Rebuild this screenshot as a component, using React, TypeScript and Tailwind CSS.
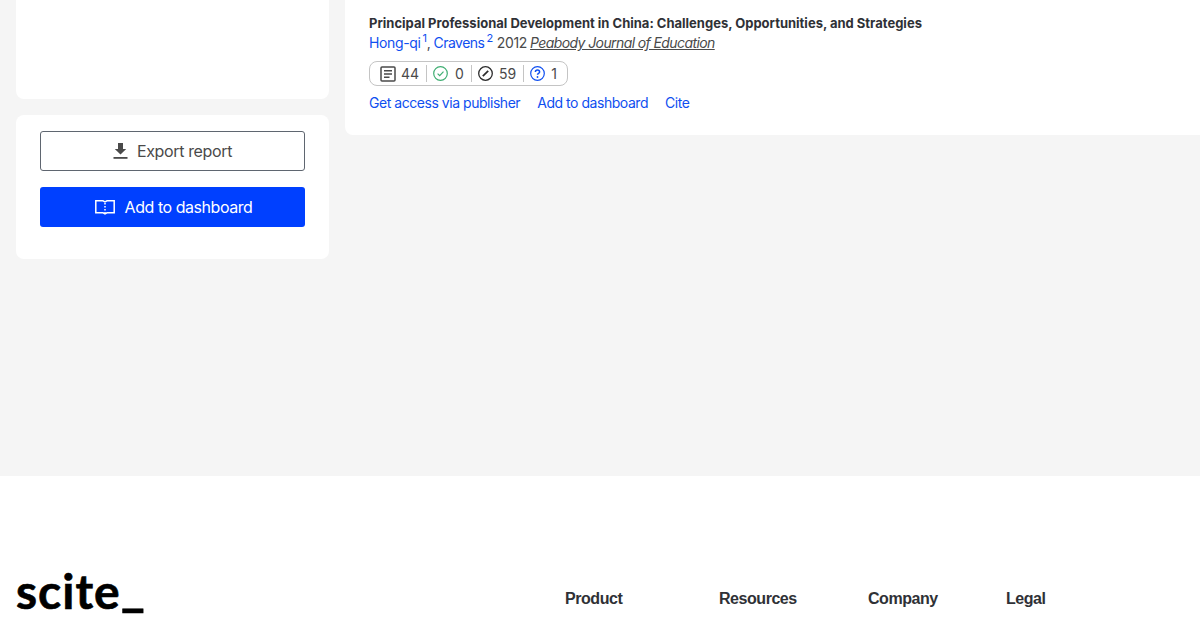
import React from "react";

const sans = "font-['Inter','Liberation_Sans',sans-serif]";

function Stat({ icon, n, last, gap }: { icon: React.ReactNode; n: number; last?: boolean; gap: string }) {
  return (
    <span className={`flex items-center ${gap} h-[17px] pr-[7px] mr-[6px] ${last ? "" : "border-r border-[#c4c4c4]"}`}>
      {icon}
      <span className="text-[14px] leading-none text-[#4a4a4a]">{n}</span>
    </span>
  );
}

const DocIcon = (
  <svg width="16" height="16" viewBox="0 0 16 16" fill="none" stroke="#4a4a4a" strokeWidth="1.5">
    <rect x="1" y="1" width="14" height="14" rx="1" />
    <path d="M4 4.800h8M4 8h8M4 11.200h5.500" />
  </svg>
);
const CheckIcon = (
  <svg width="15" height="15" viewBox="0 0 15 15" fill="none" stroke="#3fae72" strokeWidth="1.200">
    <circle cx="7.500" cy="7.500" r="6.800" />
    <path d="M4.600 7.600l2.100 2.100 3.800-4" />
  </svg>
);
const SlashIcon = (
  <svg width="15" height="15" viewBox="0 0 15 15" fill="none" stroke="#2c2c2c" strokeWidth="1.300">
    <circle cx="7.500" cy="7.500" r="6.800" />
    <path d="M4.800 10.200L10.200 4.800" strokeWidth="1.700" />
  </svg>
);
const QIcon = (
  <svg width="15" height="15" viewBox="0 0 15 15" fill="none" stroke="#0f4ff0" strokeWidth="1.200">
    <circle cx="7.500" cy="7.500" r="6.800" />
    <path d="M5.400 6c0-1.300 1-2 2.100-2s2.100.7 2.100 1.900c0 1.500-2.100 1.500-2.100 2.900" strokeWidth="1.500" />
    <circle cx="7.500" cy="11" r="0.900" fill="#0f4ff0" stroke="none" />
  </svg>
);

export default function App() {
  return (
    <div className={`w-[1200px] h-[630px] overflow-hidden bg-[#f5f5f5] ${sans}`}>
      <main className="h-[476px] flex items-start pl-4 gap-4">
        <aside className="w-[313px] shrink-0 flex flex-col gap-4">
          <div className="h-[99px] bg-white rounded-b-lg" />
          <div className="h-[144px] bg-white rounded-lg px-6 pt-4 flex flex-col gap-4">
            <button className="h-10 w-full rounded-[3px] border border-[#5f6670] bg-white flex items-center justify-center gap-[9px] text-[16px] tracking-[-0.35px] text-[#4a4a4a]">
              <svg width="15" height="18" viewBox="0 0 15 18" fill="#4a4a4a">
                <path d="M5 1h5v6h3.200L7.500 12.600 1.800 7H5z" />
                <rect x="0.500" y="15" width="14" height="1.800" />
              </svg>
              Export report
            </button>
            <button className="h-10 w-full rounded-[3px] bg-[#0040ff] flex items-center justify-center gap-[10px] pl-[2px] text-[16px] tracking-[-0.45px] text-white">
              <svg width="20" height="17" viewBox="0 0 20 17" fill="none" stroke="white" strokeWidth="1.500">
                <path d="M.800 1.800H8l2 1 2-1h7.200v12H12l-2 1-2-1H.800z" />
                <path d="M10 4v10" strokeDasharray="1.500 1.500" />
              </svg>
              Add to dashboard
            </button>
          </div>
        </aside>
        <section className="flex-1 h-[135px] bg-white rounded-bl-lg pl-6 pt-[15px]">
          <h3 className="text-[13px] leading-4 font-bold text-[#2f3136] whitespace-nowrap">
            Principal Professional Development in China: Challenges, Opportunities, and Strategies
          </h3>
          <p className="mt-[4px] h-4 flex items-baseline text-[14px] leading-4 tracking-[-0.35px] text-[#4a4a4a] whitespace-nowrap">
            <span className="text-[#0f4ff0]">Hong-qi</span>
            <sup className="text-[11px] text-[#0f4ff0] ml-[2px] top-[-6px]">1</sup>
            <span>,</span>
            <span className="text-[#0f4ff0] ml-[3px] tracking-[-0.5px]">Cravens</span>
            <sup className="text-[11px] text-[#0f4ff0] ml-[2px] top-[-6px]">2</sup>
            <span className="ml-[4px]">2012</span>
            <span className="ml-[3px] italic underline tracking-[-0.6px]">Peabody Journal of Education</span>
          </p>
          <div className="mt-[10px] w-[199px] h-[25px] rounded-lg border border-[#c4c4c4] flex items-center pl-[10px]">
            <Stat icon={DocIcon} n={44} gap="gap-[5px]" />
            <Stat icon={CheckIcon} n={0} gap="gap-[7px]" />
            <Stat icon={SlashIcon} n={59} gap="gap-[6px]" />
            <Stat icon={QIcon} n={1} gap="gap-[6px]" last />
          </div>
          <div className="mt-[9px] flex text-[14px] leading-4 tracking-[-0.46px] text-[#0f4ff0] whitespace-nowrap">
            <a className="mr-[17px]">Get access via publisher</a>
            <a className="mr-[17px]">Add to dashboard</a>
            <a>Cite</a>
          </div>
        </section>
      </main>
      <footer className="h-[154px] bg-white flex items-start pl-4 pt-[83px]">
        <div className="w-[549px] shrink-0 text-[48px] leading-[60px] font-bold tracking-[1px] text-black [-webkit-text-stroke:0.6px_black] font-['Lato',sans-serif]">
          scite<span className="relative top-[-4px] text-[52px] tracking-normal">_</span>
        </div>
        <div className="flex pt-[30px] text-[16px] leading-[20px] font-bold tracking-[-0.45px] text-[#2f3136] font-['Liberation_Sans',sans-serif]">
          <span className="w-[154px]">Product</span>
          <span className="w-[149px]">Resources</span>
          <span className="w-[138px]">Company</span>
          <span>Legal</span>
        </div>
      </footer>
    </div>
  );
}
